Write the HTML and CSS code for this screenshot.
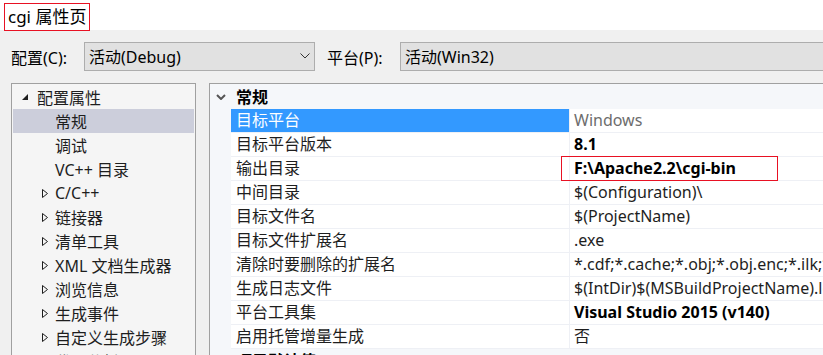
FILE: index.html
```html
<!DOCTYPE html>
<html lang="zh-CN">
<head>
    <meta charset="UTF-8">
    <title>cgi 属性页</title>
    <link rel="stylesheet" href="styles.css">
</head>
<body>

    <!-- Title -->
    <div class="title-bar">
        <span class="title">cgi 属性页</span>
    </div>

    <!-- Configuration / platform pickers -->
    <div class="toolbar">
        <span class="label">配置(C):</span>
        <div class="combo combo-config">
            <span>活动(Debug)</span>
            <svg class="combo-arrow" width="10" height="6" viewBox="0 0 10 6"><path d="M0.5 0.5 L5 5 L9.5 0.5" fill="none" stroke="#333" stroke-width="1"/></svg>
        </div>
        <span class="label">平台(P):</span>
        <div class="combo combo-platform">
            <span>活动(Win32)</span>
        </div>
    </div>

    <div class="main">
        <!-- Left tree -->
        <div class="tree">
            <div class="tree-item root">
                <svg class="expanded" width="6" height="6" viewBox="0 0 6 6"><path d="M6 0 L6 6 L0 6 Z" fill="#1e1e1e"/></svg>
                配置属性
            </div>
            <div class="tree-item leaf selected">常规</div>
            <div class="tree-item leaf">调试</div>
            <div class="tree-item leaf">VC++ 目录</div>
            <div class="tree-item node"><svg class="collapsed" width="6" height="9" viewBox="0 0 6 9"><path d="M0.5 0.5 L5.5 4.5 L0.5 8.5 Z" fill="none" stroke="#1e1e1e" stroke-width="1"/></svg>C/C++</div>
            <div class="tree-item node"><svg class="collapsed" width="6" height="9" viewBox="0 0 6 9"><path d="M0.5 0.5 L5.5 4.5 L0.5 8.5 Z" fill="none" stroke="#1e1e1e" stroke-width="1"/></svg>链接器</div>
            <div class="tree-item node"><svg class="collapsed" width="6" height="9" viewBox="0 0 6 9"><path d="M0.5 0.5 L5.5 4.5 L0.5 8.5 Z" fill="none" stroke="#1e1e1e" stroke-width="1"/></svg>清单工具</div>
            <div class="tree-item node"><svg class="collapsed" width="6" height="9" viewBox="0 0 6 9"><path d="M0.5 0.5 L5.5 4.5 L0.5 8.5 Z" fill="none" stroke="#1e1e1e" stroke-width="1"/></svg>XML 文档生成器</div>
            <div class="tree-item node"><svg class="collapsed" width="6" height="9" viewBox="0 0 6 9"><path d="M0.5 0.5 L5.5 4.5 L0.5 8.5 Z" fill="none" stroke="#1e1e1e" stroke-width="1"/></svg>浏览信息</div>
            <div class="tree-item node"><svg class="collapsed" width="6" height="9" viewBox="0 0 6 9"><path d="M0.5 0.5 L5.5 4.5 L0.5 8.5 Z" fill="none" stroke="#1e1e1e" stroke-width="1"/></svg>生成事件</div>
            <div class="tree-item node"><svg class="collapsed" width="6" height="9" viewBox="0 0 6 9"><path d="M0.5 0.5 L5.5 4.5 L0.5 8.5 Z" fill="none" stroke="#1e1e1e" stroke-width="1"/></svg>自定义生成步骤</div>
            <div class="tree-item node"><svg class="collapsed" width="6" height="9" viewBox="0 0 6 9"><path d="M0.5 0.5 L5.5 4.5 L0.5 8.5 Z" fill="none" stroke="#1e1e1e" stroke-width="1"/></svg>代码分析</div>
        </div>

        <!-- Property grid -->
        <div class="grid">
            <div class="category">
                <span class="gutter">
                    <svg width="10" height="6" viewBox="0 0 10 6"><path d="M1 1 L5 5 L9 1" fill="none" stroke="#555" stroke-width="2"/></svg>
                </span>
                <span class="cat-name">常规</span>
            </div>
            <div class="prop selected">
                <span class="gutter"></span>
                <span class="name">目标平台</span>
                <span class="value muted">Windows</span>
            </div>
            <div class="prop">
                <span class="gutter"></span>
                <span class="name">目标平台版本</span>
                <span class="value bold">8.1</span>
            </div>
            <div class="prop">
                <span class="gutter"></span>
                <span class="name">输出目录</span>
                <span class="value bold">F:\Apache2.2\cgi-bin</span>
                <span class="highlight"></span>
            </div>
            <div class="prop">
                <span class="gutter"></span>
                <span class="name">中间目录</span>
                <span class="value">$(Configuration)\</span>
            </div>
            <div class="prop">
                <span class="gutter"></span>
                <span class="name">目标文件名</span>
                <span class="value">$(ProjectName)</span>
            </div>
            <div class="prop">
                <span class="gutter"></span>
                <span class="name">目标文件扩展名</span>
                <span class="value">.exe</span>
            </div>
            <div class="prop">
                <span class="gutter"></span>
                <span class="name">清除时要删除的扩展名</span>
                <span class="value">*.cdf;*.cache;*.obj;*.obj.enc;*.ilk;*.resources;*.tlb;*.tli;*.tlh;*.tmp</span>
            </div>
            <div class="prop">
                <span class="gutter"></span>
                <span class="name">生成日志文件</span>
                <span class="value">$(IntDir)$(MSBuildProjectName).log</span>
            </div>
            <div class="prop">
                <span class="gutter"></span>
                <span class="name">平台工具集</span>
                <span class="value bold">Visual Studio 2015 (v140)</span>
            </div>
            <div class="prop">
                <span class="gutter"></span>
                <span class="name">启用托管增量生成</span>
                <span class="value">否</span>
            </div>
            <div class="category">
                <span class="gutter"></span>
                <span class="cat-name">项目默认值</span>
            </div>
        </div>
    </div>

</body>
</html>
```

FILE: styles.css
```css
body {
    margin: 0;
    height: 355px;
    overflow: hidden;
    background-color: #f0f0f0;
    font-family: "Noto Sans", "Noto Sans CJK SC", sans-serif;
    font-size: 16px;
    color: #1e1e1e;
}
.title-bar {
    height: 30px;
    background-color: #ffffff;
    padding: 3px 0 0 4px;
    box-sizing: border-box;
}
.title {
    display: inline-block;
    height: 28px;
    line-height: 25px;
    padding: 0 3px;
    border: 1px solid #e81123;
    box-sizing: border-box;
    font-size: 17px;
    color: #000;
}
.toolbar {
    display: flex;
    align-items: center;
    height: 53px;
    padding: 0 0 0 11px;
    box-sizing: border-box;
}
.label {
    width: 73px;
    color: #000;
}
.combo {
    display: flex;
    align-items: center;
    height: 29px;
    margin-top: -1px;
    padding-left: 4px;
    border: 1px solid #adadad;
    background-color: #e1e1e1;
    box-sizing: border-box;
    color: #000;
}
.combo-config {
    width: 231px;
    margin-right: 12px;
}
.combo-arrow {
    margin-left: auto;
    margin-right: 4px;
}
.combo-platform {
    flex: 1;
    margin-right: -20px;
}
.main {
    display: flex;
    align-items: flex-start;
    padding-left: 11px;
}
.tree {
    width: 185px;
    height: 300px;
    border: 1px solid #a0a0a0;
    padding: 1px;
    box-sizing: border-box;
    background-color: #f5f5f5;
    margin-right: 13px;
}
.tree-item {
    display: flex;
    align-items: center;
    height: 24px;
    white-space: nowrap;
}
.tree-item.root {
    padding-left: 9px;
}
.tree-item.root .expanded {
    margin-right: 9px;
}
.tree-item.leaf {
    padding-left: 42px;
}
.tree-item.node {
    padding-left: 29px;
}
.tree-item.node .collapsed {
    margin-right: 7px;
}
.tree-item.selected {
    background-color: #cccedb;
}
.grid {
    flex: 1;
    height: 300px;
    border: 1px solid #a0a0a0;
    border-right: none;
    padding-top: 1px;
    box-sizing: border-box;
    background-color: #f5f7fa;
    overflow: hidden;
}
.category, .prop {
    display: flex;
    height: 24px;
    white-space: nowrap;
}
.prop {
    position: relative;
}
.gutter {
    width: 21px;
    flex-shrink: 0;
    display: flex;
    align-items: center;
    padding-left: 6px;
    box-sizing: border-box;
    background-color: #f5f7fa;
}
.cat-name {
    font-weight: bold;
    line-height: 24px;
    padding-left: 5px;
    color: #000;
}
.prop .name {
    width: 339px;
    flex-shrink: 0;
    padding-left: 5px;
    box-sizing: border-box;
    line-height: 23px;
    background-color: #ffffff;
    border-bottom: 1px solid #eef0f5;
    border-right: 1px solid #eef0f5;
}
.prop .value {
    flex: 1;
    padding-left: 4px;
    line-height: 23px;
    background-color: #ffffff;
    border-bottom: 1px solid #eef0f5;
    overflow: hidden;
}
.prop.selected .name {
    background-color: #3399ff;
    color: #ffffff;
}
.value.muted {
    color: #6d6d6d;
}
.value.bold {
    font-weight: bold;
    color: #000;
}
.highlight {
    position: absolute;
    left: 351px;
    top: -1px;
    width: 217px;
    height: 25px;
    border: 1px solid #e81123;
    box-sizing: border-box;
}
```
